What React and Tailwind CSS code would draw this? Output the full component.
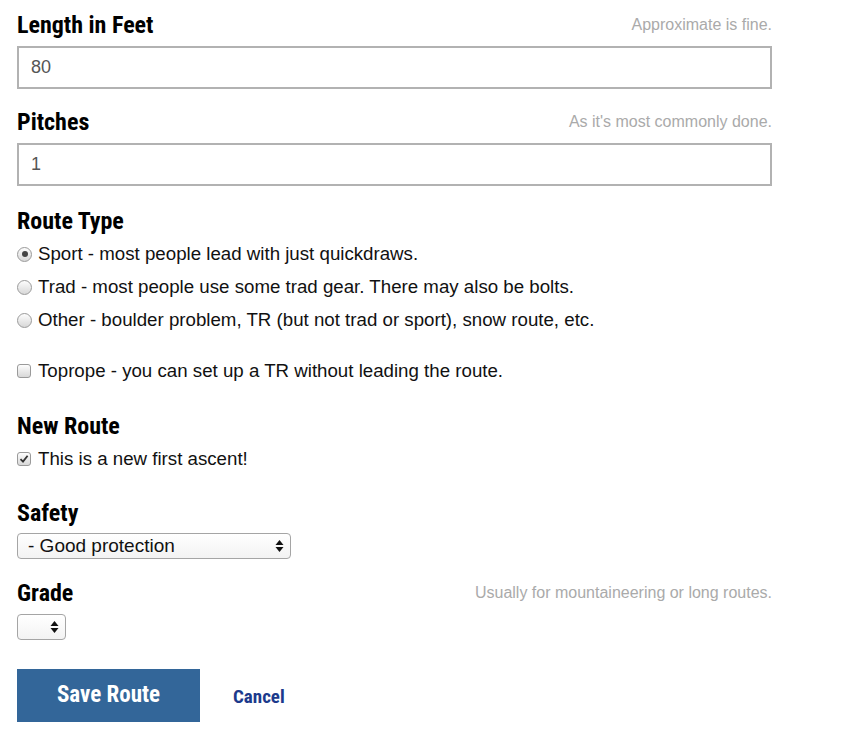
import React from 'react';

const HEAD = "font-['Roboto_Condensed','Liberation_Sans_Narrow','DejaVu_Sans_Condensed',sans-serif] font-bold";
const BODY = "font-['Liberation_Sans',Arial,sans-serif]";

function Heading({ children, hint }) {
  return (
    <div className="flex items-center justify-between">
      <h3 className={`${HEAD} text-[24px] leading-[28px] text-black`}>{children}</h3>
      {hint && <span className={`${BODY} text-[16px] text-[#aaa]`}>{hint}</span>}
    </div>
  );
}

function Radio({ checked, label }) {
  return (
    <label className={`${BODY} flex items-center gap-[6px] text-[18.7px] leading-[22px] text-[#111]`}>
      <span className="w-[15px] h-[15px] rounded-full border border-[#9a9a9a] bg-gradient-to-b from-[#fdfdfd] to-[#d8d8d8] flex items-center justify-center shrink-0">
        {checked && <span className="w-[6px] h-[6px] rounded-full bg-[#444]" />}
      </span>
      {label}
    </label>
  );
}

function Check({ checked, label }) {
  return (
    <label className={`${BODY} flex items-center gap-[7px] text-[18.7px] leading-[22px] text-[#111]`}>
      <span className="w-[14px] h-[14px] rounded-[3px] border border-[#9a9a9a] bg-gradient-to-b from-[#fdfdfd] to-[#d8d8d8] flex items-center justify-center shrink-0">
        {checked && (
          <svg width="10" height="10" viewBox="0 0 10 10">
            <path d="M1.5 5.2 L4 7.6 L8.6 1.8" fill="none" stroke="#333" strokeWidth="1.8" />
          </svg>
        )}
      </span>
      {label}
    </label>
  );
}

function Arrows() {
  return (
    <svg width="9" height="14" viewBox="0 0 9 14">
      <path d="M4.5 1 L8.5 6 L0.5 6 Z" fill="#111" />
      <path d="M4.5 13 L8.5 8 L0.5 8 Z" fill="#111" />
    </svg>
  );
}

function Select({ value, width }) {
  return (
    <div className={`${BODY} ${width} h-[26px] rounded-[4px] border border-[#a5a5a5] bg-gradient-to-b from-white to-[#f3f3f3] flex items-center justify-between pl-[10px] pr-[6px] text-[19px] text-[#111]`}>
      <span>{value}</span>
      <Arrows />
    </div>
  );
}

export default function App() {
  return (
    <div className="bg-white w-[844px] h-[750px] pl-[17px] pt-[11px]">
      <div className="w-[755px]">
        <Heading hint="Approximate is fine.">Length in Feet</Heading>
        <div className={`${BODY} mt-[7px] h-[43px] border-2 border-[#b2b2b2] flex items-center px-[12px] text-[18px] text-[#555]`}>80</div>

        <div className="mt-[19px]">
          <Heading hint="As it's most commonly done.">Pitches</Heading>
        </div>
        <div className={`${BODY} mt-[7px] h-[43px] border-2 border-[#b2b2b2] flex items-center px-[12px] text-[18px] text-[#555]`}>1</div>

        <div className="mt-[21px]">
          <Heading>Route Type</Heading>
        </div>
        <div className="mt-[8px] flex flex-col gap-[11px]">
          <Radio checked label="Sport - most people lead with just quickdraws." />
          <Radio label="Trad - most people use some trad gear. There may also be bolts." />
          <Radio label="Other - boulder problem, TR (but not trad or sport), snow route, etc." />
        </div>
        <div className="mt-[29px]">
          <Check label="Toprope - you can set up a TR without leading the route." />
        </div>

        <div className="mt-[30px]">
          <Heading>New Route</Heading>
        </div>
        <div className="mt-[8px]">
          <Check checked label="This is a new first ascent!" />
        </div>

        <div className="mt-[29px]">
          <Heading>Safety</Heading>
        </div>
        <div className="mt-[6px]">
          <Select value="- Good protection" width="w-[274px]" />
        </div>

        <div className="mt-[20px]">
          <Heading hint="Usually for mountaineering or long routes.">Grade</Heading>
        </div>
        <div className="mt-[7px]">
          <Select value="" width="w-[49px]" />
        </div>

        <div className="mt-[29px] flex items-center">
          <button className={`${HEAD} w-[183px] h-[53px] bg-[#336699] text-white text-[23px]`}>Save Route</button>
          <a className={`${HEAD} ml-[33px] mt-[3px] text-[19px] text-[#1c3a8c] cursor-pointer`}>Cancel</a>
        </div>
      </div>
    </div>
  );
}
